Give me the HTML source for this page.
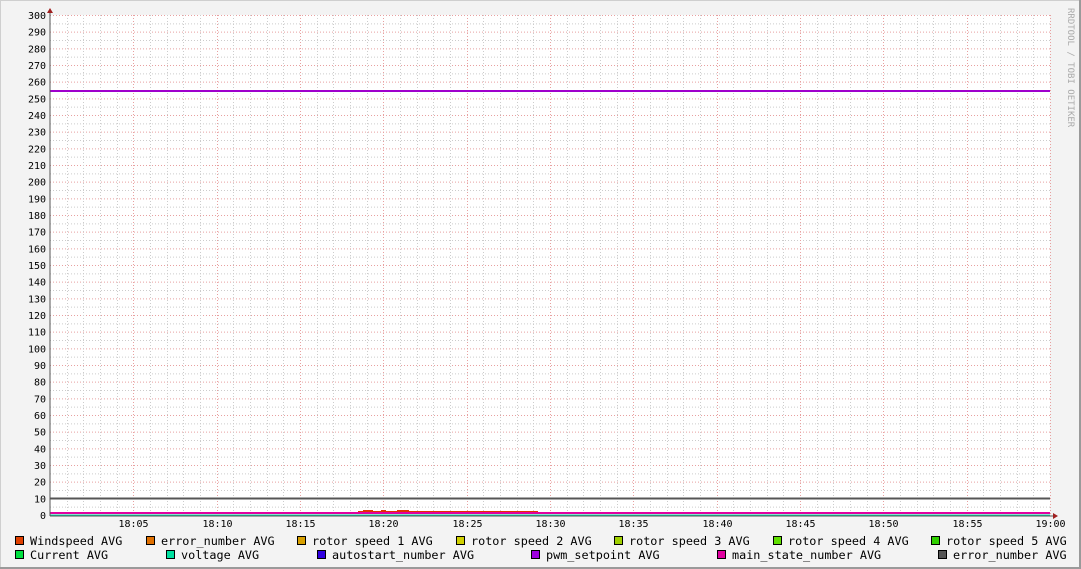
<!DOCTYPE html>
<html><head><style>
html,body{margin:0;padding:0;background:#f3f3f3;}
svg{display:block}
text{font-family:"DejaVu Sans Mono","Liberation Mono",monospace;fill:#000}
</style></head><body>
<svg width="1081" height="569" xmlns="http://www.w3.org/2000/svg">
<rect x="0" y="0" width="1081" height="569" fill="#f3f3f3"/>
<rect x="0.5" y="0.5" width="1079" height="567" fill="none" stroke="#cfcfcf"/>
<line x1="1080" y1="0" x2="1080" y2="569" stroke="#9a9a9a" stroke-width="2"/>
<line x1="0" y1="568" x2="1081" y2="568" stroke="#9a9a9a" stroke-width="2"/>
<rect x="50" y="15" width="1000" height="501" fill="#fff"/>
<g id="grid"></g>
<line x1="50" y1="91" x2="1050" y2="91" stroke="#a000cc" stroke-width="2"/>
<line x1="50" y1="498.5" x2="1050" y2="498.5" stroke="#555" stroke-width="2"/>
<g fill="#e03000">
<rect x="358" y="511" width="180" height="2"/>
<rect x="363" y="510" width="10" height="2"/>
<rect x="381" y="510" width="5" height="2"/>
<rect x="397" y="510" width="12" height="2"/>
</g>
<line x1="50" y1="513" x2="1050" y2="513" stroke="#e000a0" stroke-width="2"/>
<line x1="50" y1="515" x2="1050" y2="515" stroke="#00d0a0" stroke-width="1"/>
<line x1="50" y1="516" x2="1057" y2="516" stroke="#555" stroke-width="1"/>
<line x1="50" y1="10" x2="50" y2="516" stroke="#555" stroke-width="1"/>
<polygon points="47,13 53,13 50,8" fill="#a02020"/>
<polygon points="1053,513 1053,519 1058,516" fill="#a02020"/>
<g id="ylab" font-size="10" text-anchor="end"></g>
<g id="xlab" font-size="10" text-anchor="middle"></g>
<text transform="translate(1068,8) rotate(90)" font-size="9" style="fill:#aaa">RRDTOOL / TOBI OETIKER</text>
<g font-size="11.8" id="leg"></g>
</svg>
<script>
var ns="http://www.w3.org/2000/svg";
function el(p,t,a,tx){var e=document.createElementNS(ns,t);for(var k in a)e.setAttribute(k,a[k]);if(tx)e.textContent=tx;document.getElementById(p).appendChild(e);}
for(var i=0;i<=60;i++){var v=i*5,y=515-v*500/300;if(i%2==0){el('grid','line',{x1:50,x2:1050,y1:y+.5,y2:y+.5,stroke:'#e8a0a0','stroke-dasharray':'1,2'});el('ylab','text',{x:46,y:y+4},String(v));}else el('grid','line',{x1:50,x2:1050,y1:y+.5,y2:y+.5,stroke:'#ccc','stroke-dasharray':'1,2'});}
for(var m=1;m<=60;m++){var x=50+m*1000/60;x=Math.round(x)+.5;el('grid','line',{x1:x,x2:x,y1:15,y2:516,stroke:m%5==0?'#e8a0a0':'#ccc','stroke-dasharray':'1,2'});if(m%5==0){var mm=m==60?'19:00':'18:'+(m<10?'0':'')+m;el('xlab','text',{x:x,y:527},mm);}}
var L=[[15,540,'#e04000','Windspeed AVG'],[146,540,'#e07000','error_number AVG'],[297,540,'#d8a000','rotor speed 1 AVG'],[456,540,'#d0d000','rotor speed 2 AVG'],[614,540,'#a0d000','rotor speed 3 AVG'],[773,540,'#60e000','rotor speed 4 AVG'],[931,540,'#30d000','rotor speed 5 AVG'],
[15,554,'#00e040','Current AVG'],[166,554,'#00e0a0','voltage AVG'],[317,554,'#3000e0','autostart_number AVG'],[531,554,'#a000e0','pwm_setpoint AVG'],[717,554,'#e000a0','main_state_number AVG'],[938,554,'#555555','error_number AVG']];
L.forEach(function(l){el('leg','rect',{x:l[0]+.5,y:l[1]-3.5,width:8,height:8,fill:l[2],stroke:'#000'});el('leg','text',{x:l[0]+15,y:l[1]+5},l[3]);});
</script>
</body></html>
